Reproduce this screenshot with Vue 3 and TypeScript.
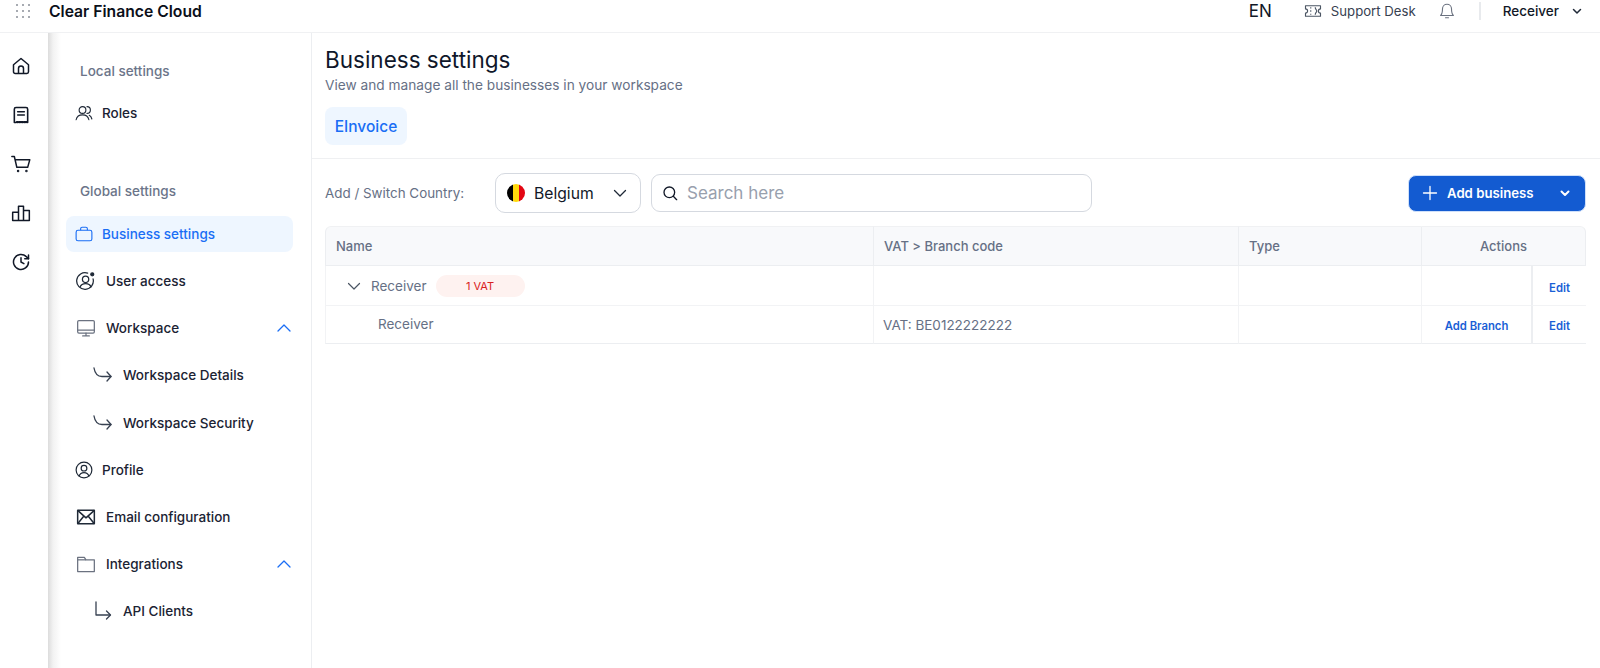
<template>
  <div class="page">
    <header class="topbar">
      <div class="brand">
        <svg class="grid-icon" width="14" height="14" viewBox="0 0 14 14" fill="#374151">
          <template v-for="y in [1, 7, 13]" :key="y">
            <circle v-for="x in [1, 7, 13]" :key="x" :cx="x" :cy="y" r="0.8" />
          </template>
        </svg>
        <span class="brand-name">Clear Finance Cloud</span>
      </div>
      <div class="top-right">
        <span class="lang">EN</span>
        <div class="support">
          <svg width="18" height="18" viewBox="0 0 24 24" fill="none" stroke="#4b5563" stroke-width="1.5" stroke-linejoin="round">
            <path d="M2 5h20v4.200a2.800 2.800 0 0 0 0 5.600V19H2v-4.200a2.800 2.800 0 0 0 0-5.600z" />
            <path d="M9 7v1.500M9 11v2M9 15.500V17" />
            <path d="M15 7c0 3 2 3 2 5s-2 2-2 5" />
          </svg>
          <span>Support Desk</span>
        </div>
        <svg class="bell" width="18" height="18" viewBox="0 0 24 24" fill="none" stroke="#6b7280" stroke-width="1.5" stroke-linecap="round" stroke-linejoin="round">
          <path d="M6 9a6 6 0 0 1 12 0c0 5 1 7.500 2.500 9h-17C5 16.500 6 14 6 9z" />
          <path d="M10 21h4" />
        </svg>
        <span class="divider"></span>
        <span class="user">Receiver</span>
        <svg width="12" height="12" viewBox="0 0 12 12" fill="none" stroke="#1f2937" stroke-width="1.500" stroke-linecap="round" stroke-linejoin="round">
          <path d="M2.500 4.500 6 8l3.500-3.500" />
        </svg>
      </div>
    </header>

    <div class="body">
      <nav class="rail">
        <svg width="20" height="20" viewBox="0 0 24 24" fill="none" stroke="#111827" stroke-width="1.800" stroke-linejoin="round">
          <path d="M3 10.500 12 3l9 7.500V19a2 2 0 0 1-2 2H5a2 2 0 0 1-2-2z" />
          <path d="M9 21v-6a3 3 0 0 1 6 0v6" />
        </svg>
        <svg width="20" height="20" viewBox="0 0 24 24" fill="none" stroke="#111827" stroke-width="1.900" stroke-linecap="round" stroke-linejoin="round">
          <path d="M4 21V5a2 2 0 0 1 2-2h12a2 2 0 0 1 2 2v16q-1-1.500-2 0q-1-1.500-2 0q-1-1.500-2 0q-1-1.500-2 0q-1-1.500-2 0q-1-1.500-2 0q-1-1.500-2 0z" />
          <path d="M8 8h8M8 12h8" />
        </svg>
        <svg width="20" height="20" viewBox="0 0 24 24" fill="none" stroke="#111827" stroke-width="1.800" stroke-linecap="round" stroke-linejoin="round">
          <path d="M1 3h3l3 13h13l2.500-9H5" />
          <circle cx="8.500" cy="20.500" r="0.600" />
          <circle cx="18.500" cy="20.500" r="0.600" />
        </svg>
        <svg width="20" height="20" viewBox="0 0 24 24" fill="none" stroke="#111827" stroke-width="1.800" stroke-linejoin="round">
          <path d="M2 11h7v10H2zM9 4h6v17H9zM15 9h7v12h-7z" />
        </svg>
        <svg width="20" height="20" viewBox="0 0 24 24" fill="none" stroke="#111827" stroke-width="1.800" stroke-linecap="round" stroke-linejoin="round">
          <path d="M21 12a9 9 0 1 1-2.600-6.400L21 8" />
          <path d="M21 3.500V8h-4.500" />
          <path d="M12 7v5l3.500 2" />
        </svg>
      </nav>

      <aside class="sidebar">
        <div class="section-label first">Local settings</div>
        <div class="nav-item">
          <svg width="18" height="18" viewBox="0 0 24 24" fill="none" stroke="#1f2937" stroke-width="1.500" stroke-linecap="round">
            <circle cx="10" cy="8" r="4.500" />
            <path d="M1.500 21c1-4.500 4.500-6.500 8.500-6.500s7.500 2 8.500 6.500" />
            <path d="M16 3.500a4.500 4.500 0 0 1 0 9M19 15c2 1 3 3 3.500 5" />
          </svg>
          <span>Roles</span>
        </div>

        <div class="section-label second">Global settings</div>
        <div class="nav-item active">
          <svg width="18" height="18" viewBox="0 0 24 24" fill="none" stroke="#1a6ef5" stroke-width="1.500" stroke-linejoin="round">
            <rect x="1.500" y="7" width="21" height="14" rx="2.500" />
            <path d="M7.500 7V5a2 2 0 0 1 2-2h5a2 2 0 0 1 2 2v2" />
          </svg>
          <span>Business settings</span>
        </div>
        <div class="nav-item wide">
          <svg width="20" height="20" viewBox="0 0 24 24" fill="none" stroke="#1f2937" stroke-width="1.500" stroke-linecap="round">
            <path d="M20.500 9.500A10 10 0 1 1 14 2.500" />
            <circle cx="11.500" cy="10" r="3.800" />
            <path d="M5 19c1-3 3.500-4 6.500-4s5.500 1 6.500 4" />
            <circle cx="19.500" cy="4" r="1.800" fill="#1f2937" />
          </svg>
          <span>User access</span>
        </div>
        <div class="nav-item wide">
          <svg width="20" height="20" viewBox="0 0 24 24" fill="none" stroke="#6b7280" stroke-width="1.500" stroke-linecap="round" stroke-linejoin="round">
            <rect x="2" y="3" width="20" height="15" rx="1.500" />
            <path d="M2 14.500h20M12 18v3.500M8 21.500h8" />
          </svg>
          <span>Workspace</span>
          <svg class="caret" width="16" height="16" viewBox="0 0 16 16" fill="none" stroke="#1a6ef5" stroke-width="1.300" stroke-linecap="round" stroke-linejoin="round">
            <path d="M2 11l6-6 6 6" />
          </svg>
        </div>
        <div class="nav-item sub">
          <svg width="20" height="20" viewBox="0 0 20 20" fill="none" stroke="#374151" stroke-width="1.300" stroke-linecap="round" stroke-linejoin="round">
            <path d="M1 3c1 6 4 8.500 8 8.500h9" />
            <path d="M14 7l4 4.500-4 4.500" />
          </svg>
          <span>Workspace Details</span>
        </div>
        <div class="nav-item sub security">
          <svg width="20" height="20" viewBox="0 0 20 20" fill="none" stroke="#374151" stroke-width="1.300" stroke-linecap="round" stroke-linejoin="round">
            <path d="M1 3c1 6 4 8.500 8 8.500h9" />
            <path d="M14 7l4 4.500-4 4.500" />
          </svg>
          <span>Workspace Security</span>
        </div>
        <div class="nav-item">
          <svg width="18" height="18" viewBox="0 0 24 24" fill="none" stroke="#1f2937" stroke-width="1.600" stroke-linecap="round">
            <circle cx="12" cy="12" r="10.500" />
            <circle cx="12" cy="9.500" r="3.800" />
            <path d="M5.500 20c1-3 3.500-4.500 6.500-4.500s5.500 1.500 6.500 4.500" />
          </svg>
          <span>Profile</span>
        </div>
        <div class="nav-item wide">
          <svg width="20" height="20" viewBox="0 0 24 24" fill="none" stroke="#1f2937" stroke-width="1.800" stroke-linejoin="round">
            <rect x="2" y="4" width="20" height="16" />
            <path d="M2 4l10 9 10-9M2 20l7.500-9.200M22 20l-7.500-9.200" />
          </svg>
          <span>Email configuration</span>
        </div>
        <div class="nav-item wide">
          <svg width="20" height="20" viewBox="0 0 24 24" fill="none" stroke="#6b7280" stroke-width="1.500" stroke-linejoin="round">
            <path d="M2 4h8l2 3h10v14H2z" />
            <path d="M2 7h10" />
          </svg>
          <span>Integrations</span>
          <svg class="caret" width="16" height="16" viewBox="0 0 16 16" fill="none" stroke="#1a6ef5" stroke-width="1.300" stroke-linecap="round" stroke-linejoin="round">
            <path d="M2 11l6-6 6 6" />
          </svg>
        </div>
        <div class="nav-item sub">
          <svg width="20" height="20" viewBox="0 0 20 20" fill="none" stroke="#374151" stroke-width="1.300" stroke-linecap="round" stroke-linejoin="round">
            <path d="M3 1v13h14" />
            <path d="M13.500 10l4 4-4 4" />
          </svg>
          <span>API Clients</span>
        </div>
      </aside>

      <main class="main">
        <div class="head">
          <h1>Business settings</h1>
          <p>View and manage all the businesses in your workspace</p>
          <div class="tab">EInvoice</div>
        </div>
        <div class="content">
          <div class="toolbar">
            <span class="country-label">Add / Switch Country:</span>
            <div class="country">
              <span class="flag"><i></i><i></i><i></i></span>
              <span class="country-name">Belgium</span>
              <svg width="16" height="16" viewBox="0 0 16 16" fill="none" stroke="#1f2937" stroke-width="1.300" stroke-linecap="round" stroke-linejoin="round">
                <path d="M2.500 5.500 8 11l5.500-5.500" />
              </svg>
            </div>
            <div class="search">
              <svg width="16" height="16" viewBox="0 0 24 24" fill="none" stroke="#111827" stroke-width="2" stroke-linecap="round">
                <circle cx="11" cy="11" r="8" />
                <path d="M17 17l5 5" />
              </svg>
              <span>Search here</span>
            </div>
            <button class="add">
              <svg width="16" height="16" viewBox="0 0 16 16" fill="none" stroke="#fff" stroke-width="1.300" stroke-linecap="round">
                <path d="M8 1.500v13M1.500 8h13" />
              </svg>
              <span>Add business</span>
              <svg class="add-caret" width="12" height="12" viewBox="0 0 12 12" fill="none" stroke="#fff" stroke-width="2" stroke-linecap="round" stroke-linejoin="round">
                <path d="M2.500 4.500 6 8l3.500-3.500" />
              </svg>
            </button>
          </div>

          <table class="grid">
            <colgroup>
              <col class="col-name" />
              <col class="col-vat" />
              <col class="col-type" />
              <col class="col-act" />
              <col class="col-edit" />
            </colgroup>
            <thead>
              <tr>
                <th>Name</th>
                <th>VAT &gt; Branch code</th>
                <th>Type</th>
                <th colspan="2" class="center">Actions</th>
              </tr>
            </thead>
            <tbody>
              <tr>
                <td>
                  <div class="name-cell">
                    <svg width="14" height="14" viewBox="0 0 14 14" fill="none" stroke="#4b5563" stroke-width="1.200" stroke-linecap="round" stroke-linejoin="round">
                      <path d="M1.500 4.500 7 10l5.500-5.500" />
                    </svg>
                    <span class="parent-name">Receiver</span>
                    <span class="vat-badge">1 VAT</span>
                  </div>
                </td>
                <td></td>
                <td></td>
                <td></td>
                <td class="action strong-left first-row">Edit</td>
              </tr>
              <tr>
                <td class="child">Receiver</td>
                <td class="vat">VAT: BE0122222222</td>
                <td></td>
                <td class="action">Add Branch</td>
                <td class="action strong-left">Edit</td>
              </tr>
            </tbody>
          </table>
        </div>
      </main>
    </div>
  </div>
</template>

<script setup lang="ts">
</script>

<style scoped>
.page {
  height: 668px;
  display: flex;
  flex-direction: column;
  overflow: hidden;
  background: #fff;
  font-family: Inter, "Liberation Sans", sans-serif;
  color: #111827;
}

.topbar {
  height: 22px;
  flex: none;
  display: flex;
  align-items: center;
  justify-content: space-between;
  padding-bottom: 10px;
  border-bottom: 1px solid #f0f1f3;
}

.brand {
  display: flex;
  align-items: center;
  padding-left: 16px;
}

.brand-name {
  margin-left: 19px;
  font-size: 15.7px;
  font-weight: 600;
  color: #0b0f19;
}

.top-right {
  display: flex;
  align-items: center;
  padding-right: 17px;
}

.lang {
  font-size: 17px;
  color: #111827;
  margin-right: 32px;
}

.support {
  display: flex;
  align-items: center;
  gap: 9px;
  font-size: 13.2px;
  color: #374151;
  margin-right: 22px;
}

.divider {
  width: 2px;
  height: 18px;
  background: #e8eaed;
  margin: 0 22px 0 23px;
}

.user {
  font-size: 13.5px;
  font-weight: 500;
  margin-right: 12px;
}

.body {
  flex: 1;
  display: flex;
  min-height: 0;
}

.rail {
  width: 48px;
  flex: none;
  display: flex;
  flex-direction: column;
  align-items: center;
  gap: 29px;
  padding: 23px 6px 0 0;
  box-sizing: border-box;
}

.sidebar {
  width: 264px;
  flex: none;
  box-sizing: border-box;
  padding: 0 18px;
  border-right: 1px solid #eceef1;
  background: linear-gradient(to right, #dcdcdc 0, #f2f2f2 5px, #fff 13px);
}

.section-label {
  font-size: 13.5px;
  font-weight: 500;
  color: #6b7489;
  padding-left: 14px;
}

.section-label.first {
  margin-top: 30px;
  margin-bottom: 10px;
}

.section-label.second {
  margin-top: 47px;
  margin-bottom: 17px;
}

.nav-item {
  height: 47px;
  display: flex;
  align-items: center;
  gap: 9px;
  padding-left: 9px;
  font-size: 13.5px;
  font-weight: 500;
  color: #1b2333;
}

.nav-item.active {
  height: 36px;
  margin-bottom: 5px;
  border-radius: 8px;
  background: #eef6ff;
  color: #1a6ef5;
}

.nav-item.wide {
  gap: 10px;
  padding-left: 10px;
}

.nav-item.sub {
  padding-left: 27px;
  gap: 10px;
}

.nav-item.security {
  margin-top: 1px;
}

.caret {
  margin-left: auto;
  margin-right: 1px;
}

.main {
  flex: 1;
  min-width: 0;
}

.head {
  height: 126px;
  box-sizing: border-box;
  padding: 12px 13px 0;
  border-bottom: 1px solid #eff0f2;
}

.head h1 {
  margin: 0;
  font-size: 22.5px;
  font-weight: 400;
  line-height: 30px;
  color: #0f172a;
}

.head p {
  margin: 2px 0 13px;
  font-size: 13.7px;
  line-height: 17px;
  color: #667085;
}

.tab {
  width: 82px;
  height: 38px;
  display: flex;
  align-items: center;
  justify-content: center;
  border-radius: 8px;
  background: #eef6ff;
  color: #1a6ef5;
  font-size: 15.5px;
  font-weight: 500;
}

.content {
  padding: 14px 14px 0 13px;
}

.toolbar {
  display: flex;
  align-items: center;
  height: 40px;
}

.country-label {
  width: 170px;
  font-size: 13.4px;
  color: #667085;
}

.country {
  width: 146px;
  height: 40px;
  box-sizing: border-box;
  display: flex;
  align-items: center;
  padding: 0 12px 0 11px;
  border: 1px solid #d5d9e0;
  border-radius: 10px;
}

.flag {
  width: 18px;
  height: 18px;
  display: flex;
  flex: none;
  border-radius: 50%;
  overflow: hidden;
}

.flag i {
  flex: 1;
  background: #ffd90c;
}

.flag i:first-child {
  background: #000;
}

.flag i:last-child {
  background: #e30613;
}

.country-name {
  margin-left: 9px;
  font-size: 15.7px;
  color: #111827;
}

.country svg {
  margin-left: auto;
}

.search {
  width: 441px;
  height: 38px;
  margin-left: 10px;
  box-sizing: border-box;
  display: flex;
  align-items: center;
  gap: 9px;
  padding: 0 10px;
  border: 1px solid #d5d9e0;
  border-radius: 9px;
  font-size: 17px;
  color: #98a0ad;
}

.add {
  width: 178px;
  height: 37px;
  margin-left: auto;
  display: flex;
  align-items: center;
  gap: 9px;
  padding: 0 13px;
  border: 1px solid #cfe0fa;
  border-radius: 8px;
  background: #135bd1;
  color: #fff;
  font-family: inherit;
  font-size: 13.2px;
  font-weight: 600;
}

.add-caret {
  margin-left: auto;
  margin-right: 1px;
}

.grid {
  width: 1261px;
  margin-top: 13px;
  table-layout: fixed;
  border-collapse: separate;
  border-spacing: 0;
  font-size: 13.5px;
  color: #667085;
}

.col-name {
  width: 548px;
}

.col-vat {
  width: 365px;
}

.col-type {
  width: 183px;
}

.col-act {
  width: 110px;
}

.col-edit {
  width: 55px;
}

.grid th {
  height: 40px;
  box-sizing: border-box;
  padding: 0 10px;
  text-align: left;
  font-size: 13px;
  font-weight: 500;
  background: #f8f9fb;
  border-top: 1px solid #f0f1f3;
  border-bottom: 1px solid #eceef1;
  border-left: 1px solid #eceef1;
}

.grid th:first-child {
  border-top-left-radius: 6px;
}

.grid th:last-child {
  border-top-right-radius: 6px;
  border-right: 1px solid #eceef1;
}

.grid th.center {
  text-align: center;
}

.grid td {
  height: 40px;
  box-sizing: border-box;
  padding: 0 9px;
  border-bottom: 1px solid #f2f3f5;
  border-left: 1px solid #f2f3f5;
}

.grid tbody tr:last-child td {
  height: 38px;
  border-bottom-color: #eceef1;
}

.grid td.child {
  padding: 0 0 1px 52px;
}

.grid td.vat {
  padding-top: 1px;
}

.grid td.action {
  padding: 3px 0 0;
  text-align: center;
  color: #1a5fd6;
  font-size: 11.3px;
  font-weight: 600;
}

.grid td.first-row {
  padding-top: 4px;
}

.grid td.strong-left {
  border-left: 2px solid #eceef1;
}

.name-cell {
  display: flex;
  align-items: center;
  padding-left: 12px;
}

.parent-name {
  margin-left: 10px;
}

.vat-badge {
  width: 89px;
  height: 22px;
  margin-left: 9px;
  display: flex;
  align-items: center;
  justify-content: center;
  border-radius: 11px;
  background: #fef2f0;
  color: #d92020;
  font-size: 11px;
}
</style>

<style>
html,
body {
  margin: 0;
  background: #fff;
}
</style>
